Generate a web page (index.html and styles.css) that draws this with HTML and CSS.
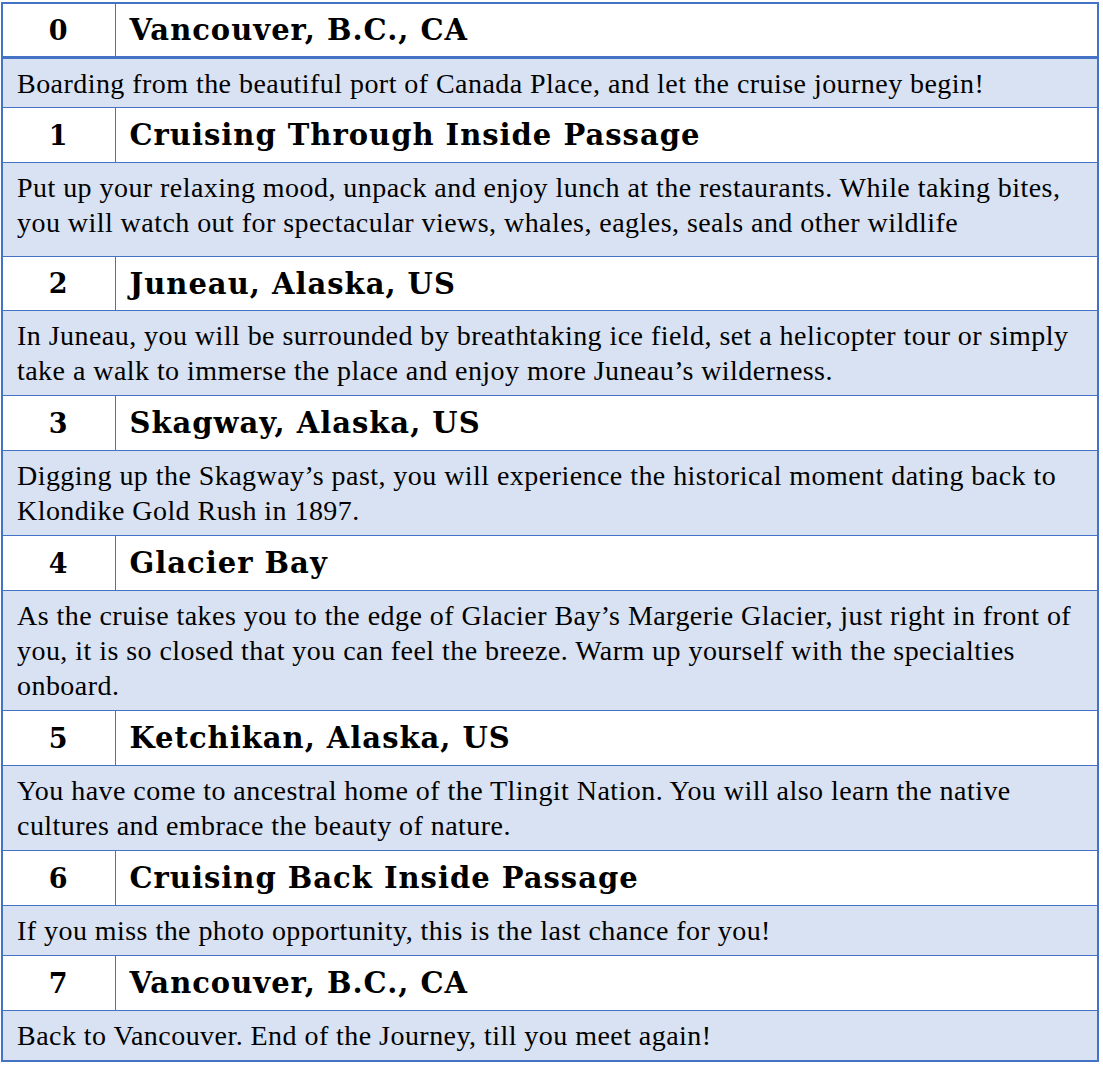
FILE: index.html
```html
<!DOCTYPE html>
<html lang="en">
<head>
<meta charset="utf-8">
<title>Cruise Itinerary</title>
<link rel="stylesheet" href="styles.css">
</head>
<body>
<table class="itin">
  <colgroup><col class="c-day"><col class="c-place"></colgroup>
  <tbody>
    <tr class="head first"><td class="day">0</td><td class="place">Vancouver, B.C., CA</td></tr>
    <tr class="desc tight"><td colspan="2">Boarding from the beautiful port of Canada Place, and let the cruise journey begin!</td></tr>
    <tr class="head"><td class="day">1</td><td class="place">Cruising Through Inside Passage</td></tr>
    <tr class="desc extra"><td colspan="2">Put up your relaxing mood, unpack and enjoy lunch at the restaurants. While taking bites, you will watch out for spectacular views, whales, eagles, seals and other wildlife</td></tr>
    <tr class="head short"><td class="day">2</td><td class="place">Juneau, Alaska, US</td></tr>
    <tr class="desc"><td colspan="2">In Juneau, you will be surrounded by breathtaking ice field, set a helicopter tour or simply take a walk to immerse the place and enjoy more Juneau’s wilderness.</td></tr>
    <tr class="head"><td class="day">3</td><td class="place">Skagway, Alaska, US</td></tr>
    <tr class="desc"><td colspan="2">Digging up the Skagway’s past, you will experience the historical moment dating back to Klondike Gold Rush in 1897.</td></tr>
    <tr class="head"><td class="day">4</td><td class="place">Glacier Bay</td></tr>
    <tr class="desc"><td colspan="2">As the cruise takes you to the edge of Glacier Bay’s Margerie Glacier, just right in front of you, it is so closed that you can feel the breeze. Warm up yourself with the specialties onboard.</td></tr>
    <tr class="head"><td class="day">5</td><td class="place">Ketchikan, Alaska, US</td></tr>
    <tr class="desc"><td colspan="2">You have come to ancestral home of the Tlingit Nation. You will also learn the native cultures and embrace the beauty of nature.</td></tr>
    <tr class="head"><td class="day">6</td><td class="place">Cruising Back Inside Passage</td></tr>
    <tr class="desc"><td colspan="2">If you miss the photo opportunity, this is the last chance for you!</td></tr>
    <tr class="head"><td class="day">7</td><td class="place">Vancouver, B.C., CA</td></tr>
    <tr class="desc"><td colspan="2">Back to Vancouver. End of the Journey, till you meet again!</td></tr>
  </tbody>
</table>
</body>
</html>
```
FILE: styles.css
```css
html, body {
  margin: 0;
  padding: 0;
  background: #ffffff;
}
body {
  padding: 2px 0 0 1px;
}
.itin {
  width: 1098px;
  border-collapse: collapse;
  table-layout: fixed;
  border: 2px solid #4472c4;
}
.c-day { width: 113px; }
.itin td {
  border: 1px solid #4472c4;
  padding: 0;
  color: #000;
}
.head td {
  height: 54px;
  background: #ffffff;
  font-family: "DejaVu Serif", "Liberation Serif", serif;
  font-weight: bold;
  font-size: 29px;
  letter-spacing: 1px;
  vertical-align: middle;
}
.head.first td {
  height: 52px;
  border-bottom: 3px solid #4472c4;
}
.head.short td {
  height: 53px;
}
.day {
  text-align: center;
  font-size: 27px !important;
}
.place {
  padding-left: 14px !important;
}
.desc td {
  background: #d9e2f3;
  font-family: "Liberation Serif", "Times New Roman", serif;
  font-size: 28px;
  letter-spacing: 0.45px;
  line-height: 35px;
  padding: 7px 14px 7px 14px;
}
.desc.tight td {
  padding-bottom: 6px;
}
.desc.extra td {
  padding-bottom: 16px;
}
```
